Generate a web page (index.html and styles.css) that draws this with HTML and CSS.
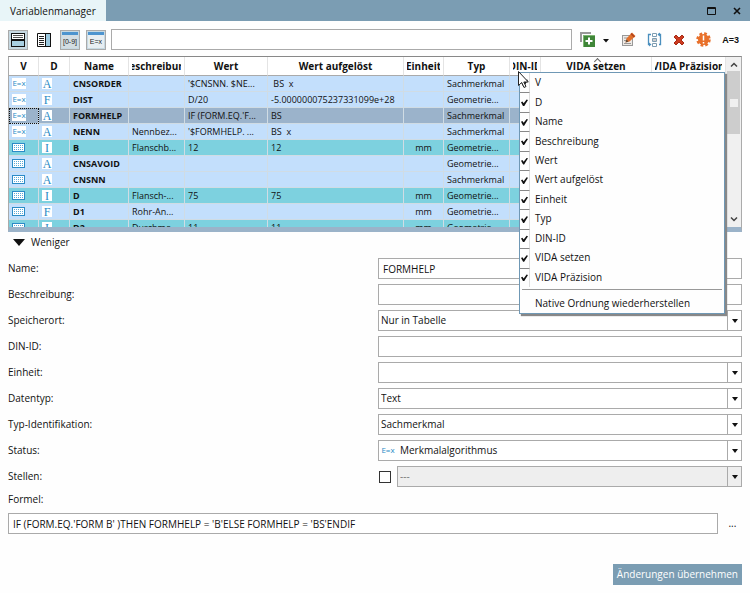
FILE: index.html
```html
<!DOCTYPE html>
<html lang="de">
<head>
    <meta charset="UTF-8">
    <meta name="viewport" content="width=device-width, initial-scale=1.0">
    <title>Variablenmanager</title>
    <link rel="stylesheet" href="styles.css">
</head>
<body>

    <!-- shared table icon -->
    <svg class="defs" width="0" height="0">
        <symbol id="icon-table" viewBox="0 0 13 9">
            <rect x="0.5" y="0.5" width="12" height="8" fill="#fff" stroke="#2b8bc6"/>
            <path d="M2 2.5h9M2 4.5h9M2 6.5h9" stroke="#5aaad8" stroke-dasharray="1 1"/>
        </symbol>
    </svg>

    <header class="titlebar">
        <h1 class="tab">Variablenmanager</h1>
        <div class="window-buttons">
            <button aria-label="Maximieren">
                <svg width="9" height="8" viewBox="0 0 9 8"><path d="M0.5 0.5h8v7h-8zM0 1.5h9" fill="none" stroke="#111"/></svg>
            </button>
            <button aria-label="Schließen">
                <svg width="8" height="8" viewBox="0 0 8 8"><path d="M1 1l6 6M7 1l-6 6" stroke="#111" stroke-width="1.6"/></svg>
            </button>
        </div>
    </header>

    <main>
        <div class="toolbar">
            <div class="view-buttons">
                <button class="pressed" aria-label="Untereinander">
                    <svg width="16" height="16" viewBox="0 0 16 16">
                        <rect x="1.5" y="1.5" width="13" height="7" fill="#fff" stroke="#111"/>
                        <path d="M3 3.5h10M3 5.5h10" stroke="#555"/>
                        <rect x="1.5" y="8.5" width="13" height="6" fill="#a9d0e2" stroke="#111"/>
                        <path d="M1 8h14" stroke="#111" stroke-width="2"/>
                    </svg>
                </button>
                <button aria-label="Nebeneinander">
                    <svg width="16" height="16" viewBox="0 0 16 16">
                        <path d="M1.5 1.5h8v13h-8z" fill="#fff" stroke="#111"/>
                        <path d="M3 4.5h5M3 6.5h5M3 8.5h5M3 10.5h5M3 12.5h5" stroke="#222"/>
                        <rect x="9.5" y="1.5" width="5" height="13" fill="#9cc9df" stroke="#111"/>
                    </svg>
                </button>
                <button class="pressed" aria-label="Wertebereich">
                    <svg width="16" height="16" viewBox="0 0 16 16">
                        <rect width="16" height="16" fill="#d3dde3"/>
                        <rect width="16" height="3" fill="#4d94cf"/>
                        <text x="8" y="12" text-anchor="middle" class="icon-text">[0-9]</text>
                    </svg>
                </button>
                <button class="pressed" aria-label="Algorithmus">
                    <svg width="16" height="16" viewBox="0 0 16 16">
                        <rect width="16" height="16" fill="#e8eef2"/>
                        <rect width="16" height="3" fill="#4d94cf"/>
                        <text x="8" y="12" text-anchor="middle" class="icon-text">E=x</text>
                    </svg>
                </button>
            </div>
            <input class="search" type="text" aria-label="Suche">
            <div class="action-buttons">
                <button aria-label="Hinzufügen">
                    <svg width="30" height="16" viewBox="0 0 30 16">
                        <path d="M1 10V1h10" fill="none" stroke="#999" stroke-width="2"/>
                        <rect x="3" y="3" width="12" height="12" fill="#3f8638"/>
                        <path d="M3 3h12v1H4v11H3z" fill="#7db672"/>
                        <path d="M9 5.5v7M5.5 9h7" stroke="#fff" stroke-width="2"/>
                        <path d="M23 7h6l-3 3.5z" fill="#111"/>
                    </svg>
                </button>
                <button aria-label="Bearbeiten">
                    <svg width="15" height="16" viewBox="0 0 15 16">
                        <rect x="1.5" y="3.5" width="10" height="10" fill="#eeeae6" stroke="#999"/>
                        <path d="M3 6h4M3 8.5h2M3 11.5h7" stroke="#999"/>
                        <path d="M4.5 10.5l1-4L11 0.5l3.5 3.5-6 5.5z" fill="#e0702c"/>
                        <path d="M10 1.5l3.5 3.5" stroke="#b0401c" stroke-width="1.5"/>
                        <path d="M4.5 10.5l1-3 2 2z" fill="#5c4a3a"/>
                    </svg>
                </button>
                <button aria-label="Umbenennen">
                    <svg width="15" height="16" viewBox="0 0 15 16">
                        <path d="M4 2.5H1.5v10H3M11 2.5h2.5v10H12" fill="none" stroke="#4a8fbe" stroke-width="1.3"/>
                        <path d="M2 10.5l2.5 2-2.5 2zM13 0.5l-2.5 2 2.5 2z" fill="#4a8fbe"/>
                        <path d="M5.5 1.5h4v3h-4zM5.5 6.5h4v3h-4zM5.5 11.5h4v3h-4z" fill="#fff" stroke="#7d9db2"/>
                        <path d="M6 8h3" stroke="#999"/>
                    </svg>
                </button>
                <button aria-label="Löschen">
                    <svg width="12" height="12" viewBox="0 0 12 12">
                        <path d="M3 1l3 3 3-3 2 2-3 3 3 3-2 2-3-3-3 3-2-2 3-3-3-3z" fill="#cc3b20" stroke="#a82a14"/>
                    </svg>
                </button>
                <button aria-label="Prüfen">
                    <svg width="15" height="15" viewBox="0 0 15 15">
                        <circle cx="7.5" cy="7.5" r="5.5" fill="#e8702a"/>
                        <circle cx="7.5" cy="7.5" r="6" fill="none" stroke="#e8702a" stroke-width="2.5" stroke-dasharray="2.7 2"/>
                        <path d="M7.5 3.5v5M7.5 10v1.5" stroke="#fff" stroke-width="1.5"/>
                    </svg>
                </button>
                <button class="assign">A=3</button>
            </div>
        </div>

        <section class="grid-area">
            <div class="grid">
                <div class="grid-clip">
                    <table>
                        <colgroup>
                            <col class="c-v"><col class="c-d"><col class="c-name"><col class="c-desc"><col class="c-value"><col>
                            <col class="c-unit"><col class="c-type"><col class="c-din"><col class="c-set"><col class="c-prec">
                        </colgroup>
                        <thead>
                            <tr>
                                <th><span>V</span></th>
                                <th><span>D</span></th>
                                <th><span>Name</span></th>
                                <th><span>Beschreibung</span></th>
                                <th><span>Wert</span></th>
                                <th><span>Wert aufgelöst</span></th>
                                <th><span>Einheit</span></th>
                                <th><span>Typ</span></th>
                                <th><span>DIN-ID</span></th>
                                <th class="sorted"><span>VIDA setzen</span></th>
                                <th><span>VIDA Präzision</span></th>
                            </tr>
                        </thead>
                        <tbody>
                            <tr><td><i class="ex">E=x</i></td><td><i class="dt">A</i></td><td>CNSORDER</td><td></td><td>'$CNSNN. $NE...</td><td>&nbsp;BS&nbsp; x</td><td></td><td>Sachmerkmal</td><td></td><td></td><td></td></tr>
                            <tr><td><i class="ex">E=x</i></td><td><i class="dt">F</i></td><td>DIST</td><td></td><td>D/20</td><td>-5.000000075237331099e+28</td><td></td><td>Geometrie...</td><td></td><td></td><td></td></tr>
                            <tr class="selected"><td><i class="ex">E=x</i></td><td><i class="dt">A</i></td><td>FORMHELP</td><td></td><td>IF (FORM.EQ.'F...</td><td>BS</td><td></td><td>Sachmerkmal</td><td></td><td></td><td></td></tr>
                            <tr><td><i class="ex">E=x</i></td><td><i class="dt">A</i></td><td>NENN</td><td>Nennbez...</td><td>'$FORMHELP. ...</td><td>BS&nbsp; x</td><td></td><td>Sachmerkmal</td><td></td><td></td><td></td></tr>
                            <tr class="geo"><td><svg class="tb"><use href="#icon-table"/></svg></td><td><i class="dt">I</i></td><td>B</td><td>Flanschb...</td><td>12</td><td>12</td><td>mm</td><td>Geometrie...</td><td></td><td></td><td></td></tr>
                            <tr><td><svg class="tb"><use href="#icon-table"/></svg></td><td><i class="dt">A</i></td><td>CNSAVOID</td><td></td><td></td><td></td><td></td><td>Geometrie...</td><td></td><td></td><td></td></tr>
                            <tr><td><svg class="tb"><use href="#icon-table"/></svg></td><td><i class="dt">A</i></td><td>CNSNN</td><td></td><td></td><td></td><td></td><td>Sachmerkmal</td><td></td><td></td><td></td></tr>
                            <tr class="geo"><td><svg class="tb"><use href="#icon-table"/></svg></td><td><i class="dt">I</i></td><td>D</td><td>Flansch-...</td><td>75</td><td>75</td><td>mm</td><td>Geometrie...</td><td></td><td></td><td></td></tr>
                            <tr><td><svg class="tb"><use href="#icon-table"/></svg></td><td><i class="dt">F</i></td><td>D1</td><td>Rohr-An...</td><td></td><td></td><td>mm</td><td>Geometrie...</td><td></td><td></td><td></td></tr>
                            <tr class="geo"><td><svg class="tb"><use href="#icon-table"/></svg></td><td><i class="dt">I</i></td><td>D2</td><td>Durchme...</td><td>11</td><td>11</td><td>mm</td><td>Geometrie...</td><td></td><td></td><td></td></tr>
                        </tbody>
                    </table>
                </div>
                <div class="scrollbar">
                    <svg width="8" height="5" viewBox="0 0 8 5"><path d="M1 4.5l3-3 3 3" fill="none" stroke="#444" stroke-width="1.5"/></svg>
                    <div class="track"><div class="thumb"></div></div>
                    <svg width="8" height="5" viewBox="0 0 8 5"><path d="M1 0.5l3 3 3-3" fill="none" stroke="#444" stroke-width="1.5"/></svg>
                </div>
            </div>

            <div class="menu">
                <div class="menu-columns">
                    <label><input type="checkbox" checked>V</label>
                    <label><input type="checkbox" checked>D</label>
                    <label><input type="checkbox" checked>Name</label>
                    <label><input type="checkbox" checked>Beschreibung</label>
                    <label><input type="checkbox" checked>Wert</label>
                    <label><input type="checkbox" checked>Wert aufgelöst</label>
                    <label><input type="checkbox" checked>Einheit</label>
                    <label><input type="checkbox" checked>Typ</label>
                    <label><input type="checkbox" checked>DIN-ID</label>
                    <label><input type="checkbox" checked>VIDA setzen</label>
                    <label><input type="checkbox" checked>VIDA Präzision</label>
                </div>
                <button class="restore">Native Ordnung wiederherstellen</button>
                <svg class="cursor" width="12" height="18" viewBox="0 0 12 18">
                    <path d="M0.5 0.5v14l3.2-3 2.3 5 2-1-2.2-4.5h4.5z" fill="#fff" stroke="#222"/>
                </svg>
            </div>
        </section>

        <button class="toggle">
            <svg width="12" height="7" viewBox="0 0 12 7"><path d="M0 0h12L6 7z" fill="#111"/></svg>
            Weniger
        </button>

        <form class="details">
            <label for="name">Name:</label>
            <input type="text" id="name" value="FORMHELP">

            <label for="desc">Beschreibung:</label>
            <input type="text" id="desc">

            <label for="storage">Speicherort:</label>
            <div class="select"><select id="storage"><option>Nur in Tabelle</option></select></div>

            <label for="din">DIN-ID:</label>
            <input type="text" id="din">

            <label for="unit">Einheit:</label>
            <div class="select"><select id="unit"><option></option></select></div>

            <label for="datatype">Datentyp:</label>
            <div class="select"><select id="datatype"><option>Text</option></select></div>

            <label for="ident">Typ-Identifikation:</label>
            <div class="select"><select id="ident"><option>Sachmerkmal</option></select></div>

            <label for="status">Status:</label>
            <div class="select with-icon"><i class="ex">E=x</i><select id="status"><option>Merkmalalgorithmus</option></select></div>

            <label for="digits">Stellen:</label>
            <div class="digits">
                <input type="checkbox" aria-label="Stellen aktivieren">
                <div class="select"><select id="digits" disabled><option>---</option></select></div>
            </div>
        </form>

        <label class="formula-label" for="formula">Formel:</label>
        <div class="formula">
            <input type="text" id="formula" value="IF (FORM.EQ.'FORM B' )THEN FORMHELP = 'B'ELSE FORMHELP = 'BS'ENDIF">
            <button aria-label="Formel bearbeiten">...</button>
        </div>

        <footer>
            <button class="apply">Änderungen übernehmen</button>
        </footer>
    </main>

</body>
</html>
```
FILE: styles.css
```css
* {
    box-sizing: border-box;
    margin: 0;
    padding: 0;
}
body {
    font-family: "Open Sans", "Noto Sans", sans-serif;
    font-size: 10px;
    line-height: 15px;
    color: #111;
    background-color: #fefefe;
}
button, input, select {
    font: inherit;
    color: inherit;
}
button {
    display: flex;
    align-items: center;
    justify-content: center;
    border: none;
    background: none;
}
svg {
    display: block;
}
.defs {
    position: absolute;
}

/* Title bar */
.titlebar {
    display: flex;
    justify-content: space-between;
    height: 21px;
    background-color: #7b9db3;
}
.tab {
    padding: 4px 10px 0;
    font-size: 10px;
    font-weight: normal;
    background-color: #e8f5f8;
}
.window-buttons {
    display: flex;
    gap: 17px;
    padding-right: 9px;
}

main {
    padding: 8px;
}

/* Toolbar */
.toolbar {
    display: flex;
    align-items: center;
    gap: 5px;
    height: 21px;
}
.view-buttons {
    display: flex;
    gap: 6px;
}
.view-buttons button {
    width: 20px;
    height: 20px;
    border: 1px solid transparent;
}
.view-buttons .pressed {
    border-color: #aaa;
    background-color: #c7d9e2;
}
.icon-text {
    font: 7px "Liberation Sans", sans-serif;
    fill: #222;
}
input[type="text"] {
    width: 100%;
    min-width: 0;
    height: 21px;
    padding: 0 4px;
    border: 1px solid #aaa;
    background-color: #fff;
}
.toolbar .search {
    flex: 1;
}
.action-buttons {
    display: flex;
    gap: 11px;
    padding: 0 3px;
}
.action-buttons .assign {
    font: bold 9px "Liberation Sans", sans-serif;
}

/* Variable table */
.grid-area {
    position: relative;
    margin-top: 6px;
}
.grid {
    display: flex;
    height: 176px;
    border: 1px solid #aaa;
    border-top: 1px solid #888;
    border-bottom: 5px solid #9bb3c9;
}
.grid-clip {
    flex: 1;
    overflow: hidden;
}
table {
    width: 100%;
    table-layout: fixed;
    border-collapse: separate;
    border-spacing: 0;
}
.c-v { width: 30px; }
.c-d { width: 31px; }
.c-name { width: 59px; }
.c-desc { width: 56px; }
.c-value { width: 83px; }
.c-unit { width: 40px; }
.c-type { width: 66px; }
.c-din { width: 31px; }
.c-set { width: 111px; }
.c-prec { width: 74px; }
th {
    height: 19px;
    padding: 1px 3px 0;
    border-right: 1px solid #e4e4e4;
    border-bottom: 1px solid #aaa;
    background-color: #fff;
}
th span {
    display: flex;
    justify-content: center;
    overflow: hidden;
    white-space: nowrap;
}
.sorted {
    position: relative;
}
.sorted::before {
    content: "";
    position: absolute;
    top: 2px;
    left: 54px;
    width: 4px;
    height: 4px;
    border: 1px solid #666;
    border-width: 1px 0 0 1px;
    transform: rotate(45deg);
}
td {
    height: 16px;
    padding: 0 0 0 3px;
    font-size: 9px;
    line-height: 15px;
    border-right: 1px solid #d0dce4;
    border-bottom: 1px solid #d0dce4;
    background-color: #c3dffc;
    white-space: nowrap;
    overflow: hidden;
    text-overflow: ellipsis;
}
.geo td {
    background-color: #7dd1df;
}
.selected td {
    background-color: #9bb3cb;
}
.selected td:first-child {
    outline: 1px dotted #111;
    outline-offset: -1px;
}
td:nth-child(3) {
    font-weight: bold;
}
td:nth-child(7) {
    padding: 0;
    text-align: center;
}
.ex, .dt {
    display: block;
    height: 11px;
    font-style: normal;
    color: #2b8bc6;
    background-color: #fff;
    text-align: center;
}
.ex {
    width: 14px;
    font-size: 8px;
    line-height: 10px;
}
.dt {
    width: 10px;
    font-family: "Liberation Serif", serif;
    font-size: 12px;
    line-height: 12px;
}
.tb {
    width: 13px;
    height: 9px;
}
.scrollbar {
    display: flex;
    flex-direction: column;
    align-items: center;
    width: 15px;
    padding: 5px 0;
    background-color: #f0f0f0;
}
.track {
    flex: 1;
    width: 100%;
    padding: 4px 1px;
}
.thumb {
    display: flex;
    align-items: center;
    justify-content: center;
    height: 63px;
    background-color: #cdcdcd;
}
.thumb::before {
    content: "";
    width: 8px;
    height: 8px;
    background-color: #f0f0f0;
}

/* Column menu */
.menu {
    position: absolute;
    top: 16px;
    right: 17px;
    z-index: 1;
    width: 206px;
    border: 1px solid #6f98b5;
    background-color: #fefefe;
    box-shadow: 2px 2px 1px #888;
}
.menu-columns {
    display: grid;
    grid-auto-rows: 1fr;
    height: 214px;
}
.menu label {
    display: flex;
    align-items: center;
    gap: 5px;
}
.menu input {
    display: flex;
    align-items: center;
    justify-content: center;
    width: 10px;
    height: 100%;
    appearance: none;
    border-top: 1px solid #888;
    border-right: 1px solid #ddd;
}
.menu label:first-child input {
    border-top: none;
}
.menu input:checked::before {
    content: "";
    width: 7px;
    height: 7px;
    background-color: #111;
    clip-path: polygon(0 45%, 20% 35%, 38% 60%, 80% 5%, 100% 12%, 45% 100%, 30% 100%);
}
.menu .restore {
    width: calc(100% - 4px);
    height: 24px;
    margin: 2px 2px 0;
    padding: 3px 0 0 13px;
    border-top: 1px solid #999;
    justify-content: flex-start;
}
.cursor {
    position: absolute;
    top: -2px;
    left: -2px;
}

/* Details */
.toggle {
    gap: 6px;
    height: 20px;
    padding-left: 5px;
}
.details {
    display: grid;
    grid-template-columns: 370px 1fr;
    align-items: center;
    row-gap: 5px;
    margin-top: 6px;
}
.select {
    position: relative;
    flex: 1;
    height: 21px;
}
.select::after {
    content: "";
    position: absolute;
    top: 9px;
    right: 4px;
    border: 3px solid transparent;
    border-top: 4px solid #111;
    border-bottom: none;
    pointer-events: none;
}
.select::before {
    content: "";
    position: absolute;
    top: 0;
    right: 14px;
    height: 100%;
    border-left: 1px solid #aaa;
}
select {
    width: 100%;
    height: 100%;
    padding: 0 16px 0 2px;
    appearance: none;
    border: 1px solid #aaa;
    border-radius: 0;
    background-color: #fff;
}
select:disabled {
    color: #777;
    background-color: #eee;
    opacity: 1;
}
.with-icon .ex {
    position: absolute;
    top: 5px;
    left: 3px;
}
.with-icon select {
    padding-left: 21px;
}
.digits {
    display: flex;
    align-items: center;
    gap: 6px;
}
.digits input {
    width: 12px;
    height: 12px;
    margin-left: 1px;
    appearance: none;
    border: 1px solid #333;
    background-color: #fff;
}
.formula-label {
    display: block;
    margin: 5px 0 6px;
}
.formula {
    display: flex;
    gap: 5px;
}
.formula button {
    width: 20px;
}
footer {
    display: flex;
    justify-content: flex-end;
    margin-top: 30px;
}
.apply {
    height: 21px;
    padding: 0 4px;
    color: #fff;
    background-color: #7b9db3;
}
```
